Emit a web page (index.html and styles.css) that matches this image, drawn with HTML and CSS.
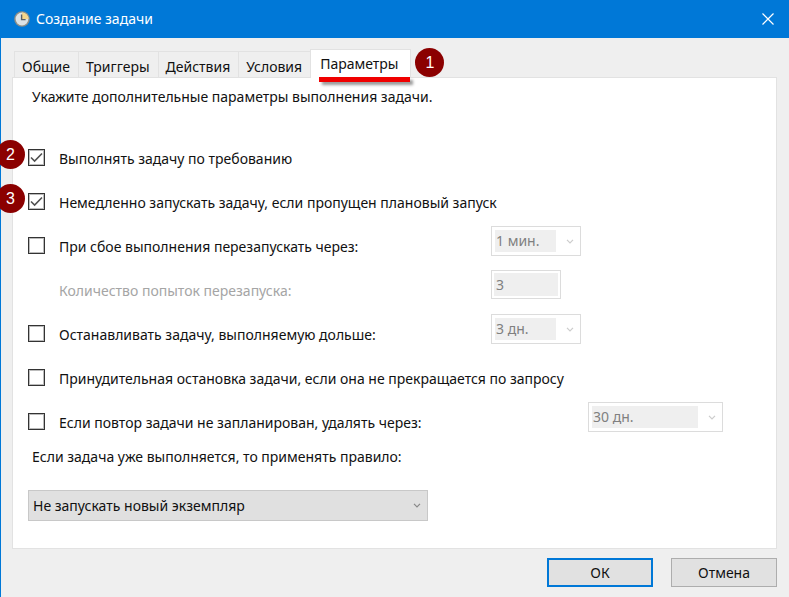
FILE: index.html
```html
<!DOCTYPE html>
<html lang="ru">
<head>
<meta charset="utf-8">
<meta name="viewport" content="width=device-width, initial-scale=1">
<title>Создание задачи</title>
<link rel="stylesheet" href="styles.css">
</head>
<body>
<div class="window">
  <header class="titlebar">
    <svg class="titlebar-icon" viewBox="0 0 16 16" aria-hidden="true">
      <circle cx="8" cy="8" r="7.8" fill="#8f8f88"/>
      <circle cx="8" cy="8" r="6.4" fill="#dde3e6"/>
      <path d="M8 8V1.6A6.4 6.4 0 0 1 14.4 8Z" fill="#f5d68a"/>
      <path d="M7.6 3.6V8.6H11.6" fill="none" stroke="#5a6067" stroke-width="1.4"/>
    </svg>
    <h1 class="titlebar-text">Создание задачи</h1>
    <button class="close" type="button" aria-label="Закрыть">
      <svg viewBox="0 0 12 12" aria-hidden="true"><path d="M0.5 0.5L11.5 11.5M11.5 0.5L0.5 11.5" stroke="#fff" stroke-width="1.2"/></svg>
    </button>
  </header>
  <form class="content">
    <div class="tabs" role="tablist">
      <button class="tab" type="button" role="tab">Общие</button>
      <button class="tab" type="button" role="tab">Триггеры</button>
      <button class="tab" type="button" role="tab">Действия</button>
      <button class="tab" type="button" role="tab">Условия</button>
      <button class="tab tab-active" type="button" role="tab" aria-selected="true">Параметры<span class="underline"></span></button>
      <span class="badge badge-tab">1</span>
    </div>
    <div class="panel" role="tabpanel">
      <p class="intro">Укажите дополнительные параметры выполнения задачи.</p>
      <div class="row">
        <span class="badge badge-row">2</span>
        <input class="check" type="checkbox" id="demand" checked>
        <label for="demand">Выполнять задачу по требованию</label>
      </div>
      <div class="row">
        <span class="badge badge-row">3</span>
        <input class="check" type="checkbox" id="missed" checked>
        <label for="missed">Немедленно запускать задачу, если пропущен плановый запуск</label>
      </div>
      <div class="row">
        <input class="check" type="checkbox" id="restart">
        <label for="restart">При сбое выполнения перезапускать через:</label>
        <div class="field">
          <select class="combo combo-short" aria-label="Интервал перезапуска" disabled><option>1 мин.</option></select>
        </div>
      </div>
      <div class="row">
        <label class="label-disabled" for="attempts">Количество попыток перезапуска:</label>
        <div class="field">
          <input class="attempts" type="text" id="attempts" value="3" disabled>
        </div>
      </div>
      <div class="row">
        <input class="check" type="checkbox" id="stop">
        <label for="stop">Останавливать задачу, выполняемую дольше:</label>
        <div class="field">
          <select class="combo combo-short" aria-label="Предельная длительность" disabled><option>3 дн.</option></select>
        </div>
      </div>
      <div class="row">
        <input class="check" type="checkbox" id="force">
        <label for="force">Принудительная остановка задачи, если она не прекращается по запросу</label>
      </div>
      <div class="row">
        <input class="check" type="checkbox" id="remove">
        <label for="remove">Если повтор задачи не запланирован, удалять через:</label>
        <div class="field field-far">
          <select class="combo combo-long" aria-label="Срок удаления" disabled><option>30 дн.</option></select>
        </div>
      </div>
      <label class="rule-label" for="rule">Если задача уже выполняется, то применять правило:</label>
      <select class="rule" id="rule"><option>Не запускать новый экземпляр</option></select>
    </div>
    <div class="actions">
      <button class="action action-default" type="submit">ОК</button>
      <button class="action" type="button">Отмена</button>
    </div>
  </form>
</div>
</body>
</html>
```
FILE: styles.css
```css
* {
  box-sizing: border-box;
}

body {
  margin: 0;
  background: #efefef;
  color: #111;
  font: 14px/20px "Noto Sans", "Open Sans", sans-serif;
}

button,
input,
select {
  margin: 0;
  font: inherit;
  color: inherit;
}

.window {
  min-height: 100vh;
  border-left: 1px solid #0078d7;
}

.titlebar {
  display: flex;
  align-items: center;
  gap: 6px;
  height: 38px;
  padding-left: 13px;
  background: #0078d7;
  color: #fff;
}

.titlebar-icon {
  width: 16px;
  height: 16px;
}

.titlebar-text {
  flex: 1;
  margin: 0;
  font-size: 14px;
  font-weight: 400;
}

.close {
  display: flex;
  align-items: center;
  justify-content: center;
  width: 42px;
  height: 38px;
  padding: 0;
  border: 0;
  background: none;
}

.close svg {
  width: 12px;
  height: 12px;
}

.content {
  padding: 11px 12px 10px 11px;
}

.tabs {
  position: relative;
  z-index: 1;
  display: flex;
  align-items: flex-end;
  height: 28px;
  padding-left: 2px;
}

.tab {
  height: 26px;
  padding: 4px 8px 0 7px;
  border: 1px solid #e2e2e2;
  border-width: 1px 0 0 1px;
  background: #efefef;
}

.tab-active {
  position: relative;
  height: 29px;
  padding: 0 12px 0 9px;
  margin-bottom: -1px;
  border-right-width: 1px;
  background: #fff;
}

.underline {
  position: absolute;
  left: 8px;
  right: 0;
  bottom: -4px;
  height: 5px;
  background: #f00000;
  box-shadow: 3px 3px 3px #999;
}

.badge {
  display: flex;
  align-items: center;
  justify-content: center;
  width: 29px;
  height: 29px;
  border-radius: 50%;
  background: #8b0000;
  color: #fff;
  font-family: "Liberation Sans", sans-serif;
  font-size: 16px;
}

.badge-tab {
  margin-left: 4px;
}

.badge-row {
  position: absolute;
  left: -32px;
  top: 5px;
}

.panel {
  padding: 9px 14px 27px 15px;
  border: 1px solid #e2e2e2;
  background: #fff;
}

.intro {
  margin: 0 0 28px;
  padding-left: 4px;
}

.row {
  position: relative;
  display: grid;
  grid-template-columns: 17px minmax(0, 1fr) auto;
  column-gap: 14px;
  align-items: center;
  height: 44px;
}

.row label {
  grid-column: 2;
  padding-top: 3px;
  white-space: nowrap;
}

.label-disabled {
  color: #a5a5a5;
}

.check {
  appearance: none;
  width: 17px;
  height: 17px;
  border: 1px solid #333;
  box-shadow: inset 0 0 0 1px #bbb;
  background: #fff;
}

.check:checked {
  background: #fff url("data:image/svg+xml,%3Csvg xmlns='http://www.w3.org/2000/svg' viewBox='0 0 13 13'%3E%3Cpath d='M1 6.5L4.6 10L12 2.5' fill='none' stroke='%23505050' stroke-width='1.6'/%3E%3C/svg%3E") center / 13px 13px no-repeat;
}

.field {
  grid-column: 3;
  align-self: start;
  display: flex;
  width: 271px;
  padding-top: 3px;
}

.field-far {
  width: 174px;
}

.combo,
.rule {
  appearance: none;
  height: 30px;
  padding: 0 28px 0 4px;
  border: 1px solid #dcdcdc;
  border-radius: 0;
  opacity: 1;
}

.combo {
  color: #808080;
  background:
    url("data:image/svg+xml,%3Csvg xmlns='http://www.w3.org/2000/svg' viewBox='0 0 8 5'%3E%3Cpath d='M1 0.8L4 3.8L7 0.8' fill='none' stroke='%23ccc' stroke-width='1.2'/%3E%3C/svg%3E") right 6px center / 8px 5px no-repeat,
    linear-gradient(#efefef, #efefef) 3px 3px / calc(100% - 27px) 22px no-repeat,
    #fff;
}

.combo-short {
  width: 90px;
}

.combo-long {
  width: 135px;
}

.attempts {
  width: 70px;
  height: 29px;
  padding: 0 2px;
  border: 1px solid #dcdcdc;
  outline: 2px solid #fff;
  outline-offset: -3px;
  background: #efefef;
  color: #808080;
}

.attempts:disabled {
  padding-left: 4px;
}

.rule-label {
  display: block;
  margin: 4px 0 23px;
  padding-left: 4px;
}

.rule {
  display: block;
  width: 400px;
  max-width: 100%;
  height: 31px;
  border-color: #c8c8c8;
  background: #e0e0e0 url("data:image/svg+xml,%3Csvg xmlns='http://www.w3.org/2000/svg' viewBox='0 0 8 5'%3E%3Cpath d='M1 0.8L4 3.8L7 0.8' fill='none' stroke='%23888' stroke-width='1.2'/%3E%3C/svg%3E") right 6px center / 8px 5px no-repeat;
}

.actions {
  display: flex;
  justify-content: flex-end;
  gap: 18px;
  margin-top: 9px;
}

.action {
  width: 106px;
  height: 29px;
  padding: 0;
  border: 1px solid #adadad;
  background: #e1e1e1;
}

.action-default {
  border: 2px solid #0078d7;
}
```
